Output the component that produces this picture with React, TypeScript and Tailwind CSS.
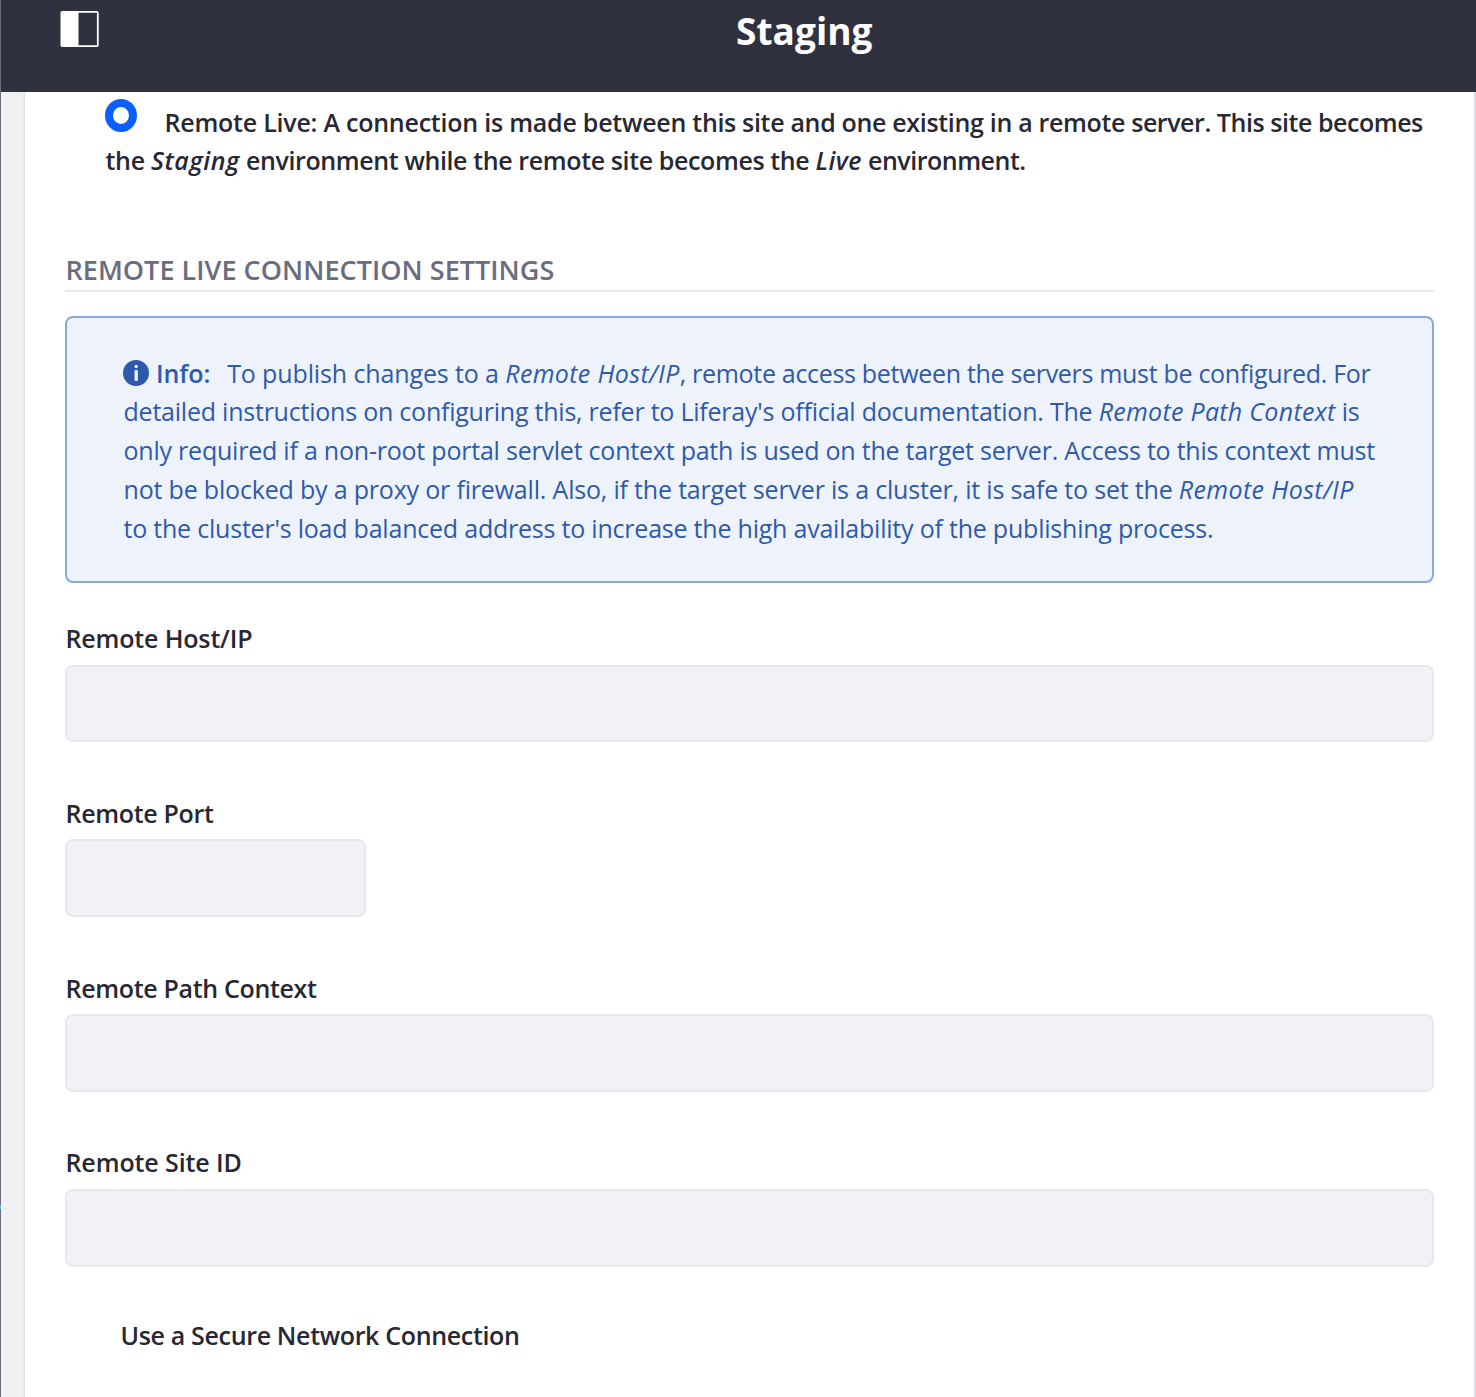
import React from "react";

function PanelIcon() {
  return (
    <svg className="mt-[11px] ml-[59px] h-9 w-[39px] shrink-0" viewBox="0 0 39 36" fill="none">
      <rect x="1.4" y="0.9" width="36.4" height="34.2" rx="0.8" stroke="#fff" strokeWidth="1.8" />
      <path d="M1.2 1h17.3v34H1.2z" fill="#fff" />
    </svg>
  );
}

function InfoIcon() {
  return (
    <svg className="mt-[6.5px] -ml-[0.5px] h-[26px] w-[26px] shrink-0" viewBox="0 0 26 26">
      <circle cx="13" cy="13" r="13" fill="#2e5aac" />
      <circle cx="13.2" cy="6.5" r="1.7" fill="#edf2fb" />
      <rect x="11.5" y="9.7" width="3.4" height="11.6" rx="1.7" fill="#edf2fb" />
    </svg>
  );
}

const fields = [
  { label: "Remote Host/IP", tracking: "tracking-[-0.16px]", width: "w-full" },
  { label: "Remote Port", tracking: "tracking-[-0.32px]", width: "w-[301px]" },
  { label: "Remote Path Context", tracking: "tracking-[-0.33px]", width: "w-full" },
  { label: "Remote Site ID", tracking: "tracking-[-0.1px]", width: "w-full" },
];

export default function App() {
  return (
    <div className="flex h-[1397px] w-[1476px] overflow-hidden bg-[#f0f1f5] font-['Open_Sans',sans-serif] text-[25px] leading-[38px] text-[#272833]">
      <div className="flex w-px shrink-0 flex-col bg-[#6b6c7e]">
        <div className="mt-[1205px] h-1 bg-[#65b6f0]" />
      </div>
      <div className="flex min-w-0 flex-1 flex-col">
        <header className="flex h-[92px] shrink-0 items-start bg-[#30313f]">
          <PanelIcon />
          <h1 className="ml-[637px] pt-[6px] text-[37px] leading-[50px] font-bold tracking-[0.05px] text-white">Staging</h1>
        </header>
        <div className="flex min-h-0 flex-1">
          <div className="w-[22px] shrink-0" />
          <div className="w-[2px] shrink-0 bg-linear-to-r from-[#ebecf0] to-[#dddee2]" />
          <main className="flex min-w-0 flex-1 flex-col border-r-2 border-[#dcdce4] bg-white pr-10 pl-10 whitespace-nowrap">
            <div className="mt-[11px] pl-10 font-semibold">
              <div className="flex h-[38px] items-start">
                <span className="-mt-1 h-[33px] w-8 shrink-0 rounded-[50%] border-8 border-[#0b5fff] bg-white" />
                <span className="ml-[27.5px] tracking-[-0.325px]">
                  <span className="tracking-[-0.23px]">Remote Live: A connection is made between</span> this site and one existing in a remote
                  <span className="tracking-[-0.45px]"> server. This site becomes</span>
                </span>
              </div>
              <div className="ml-[0.5px] tracking-[-0.38px]">
                <span className="tracking-[-0.27px]">the </span>
                <em className="tracking-[0.55px]">Staging</em> environment while the remote site becomes the{" "}
                <em className="tracking-[0.45px]">Live</em>
                <span className="tracking-[-0.48px]"> environment.</span>
              </div>
            </div>

            <h2 className="mt-[71px] h-[42px] shrink-0 border-b-2 border-[#e7e7ed] text-[27px] leading-10 font-semibold tracking-[0.04px] text-[#6b6c7e]">
              <span className="ml-[0.5px]">REMOTE LIVE CONNECTION SETTINGS</span>
            </h2>

            <div className="mt-6 h-[267px] shrink-0 rounded-lg border-2 border-[#89a7e0] bg-[#eef2fa] pt-[35.5px] pl-[56.5px] leading-[38.75px] text-[#2e5aac]">
              <div className="flex items-start">
                <InfoIcon />
                <strong className="ml-[7px] font-semibold tracking-[-0.1px]">Info:</strong>
                <span className="ml-[17px] tracking-[-0.12px]">
                  To publish changes to a <em className="tracking-[0.35px]">Remote Host/IP</em>
                  <span className="tracking-[-0.31px]">, remote access between the servers must be configured. For</span>
                </span>
              </div>
              <div className="tracking-[-0.225px]">
                detailed instructions on configuring this, refer to Liferay's official documentation. The{" "}
                <em className="tracking-[0.29px]">Remote Path Context</em> is
              </div>
              <div className="tracking-[-0.22px]">
                only required if a non-root portal servlet context path is used on the target server. Access to this context must
              </div>
              <div className="tracking-[-0.185px]">
                not be blocked by a proxy or firewall. Also, if the target server is a cluster, it is safe to set the{" "}
                <em className="tracking-[0.38px]">Remote Host/IP</em>
              </div>
              <div className="tracking-[-0.215px]">
                to the cluster's load balanced address to increase the high availability of the publishing process.
              </div>
            </div>

            <div className="mt-9 shrink-0 font-semibold">
              {fields.map((f) => (
                <label key={f.label} className="flex h-[174.75px] flex-col">
                  <span className={`ml-[0.5px] ${f.tracking}`}>{f.label}</span>
                  <input className={`mt-[7.6px] h-[77.75px] shrink-0 rounded-lg border-2 border-[#e7e7ed] bg-[#f1f2f5] px-6 outline-none ${f.width}`} />
                </label>
              ))}
            </div>

            <div className="-mt-[2px] pl-[55.5px] font-semibold tracking-[-0.34px]">Use a Secure Network Connection</div>
          </main>
        </div>
      </div>
    </div>
  );
}
